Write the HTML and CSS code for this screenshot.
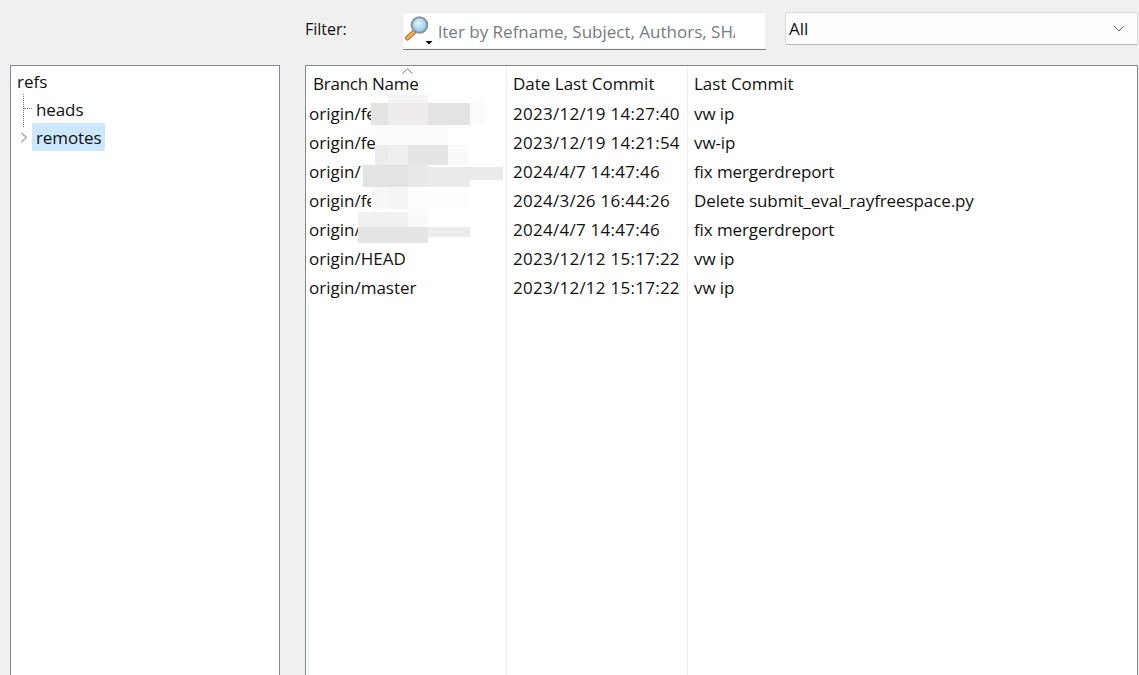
FILE: index.html
```html
<!DOCTYPE html>
<html lang="en">
<head>
<meta charset="utf-8">
<title>Branches</title>
<link rel="stylesheet" href="styles.css">
</head>
<body>
<div class="app">
  <header class="toolbar">
    <span class="filter-label">Filter:</span>
    <div class="search">
      <svg class="search-icon" width="30" height="32" viewBox="0 0 30 32">
        <defs>
          <radialGradient id="lens" cx="0.45" cy="0.4" r="0.6">
            <stop offset="0" stop-color="#e8f6fd"/>
            <stop offset="1" stop-color="#7fc0e6"/>
          </radialGradient>
        </defs>
        <path d="M10 17 L3.5 23" stroke="#b5722b" stroke-width="5" stroke-linecap="round"/>
        <path d="M10 17 L3.5 23" stroke="#f0b050" stroke-width="2.6" stroke-linecap="round"/>
        <circle cx="15.5" cy="10" r="7.8" fill="url(#lens)" stroke="#8a949c" stroke-width="2"/>
        <path d="M21.5 26 h7 l-3.5 3.5z" fill="#000"/>
      </svg>
      <span class="search-text">lter by Refname, Subject, Authors, SHA</span>
    </div>
    <div class="combo">
      <span>All</span>
      <svg class="combo-arrow" width="12" height="7" viewBox="0 0 12 7"><path d="M1 1 L6 6 L11 1" fill="none" stroke="#6a6a6a" stroke-width="1"/></svg>
    </div>
  </header>
  <main class="panes">
    <nav class="tree">
      <div class="tree-row tree-root">refs</div>
      <div class="tree-row tree-child">
        <span class="guide guide-v"></span>
        <span class="guide guide-h"></span>
        <span class="tree-label">heads</span>
      </div>
      <div class="tree-row tree-child">
        <svg class="expander" width="8" height="11" viewBox="0 0 8 11"><path d="M1.5 1 L6.5 5.5 L1.5 10" fill="none" stroke="#a6a6a6" stroke-width="1.3"/></svg>
        <span class="tree-label selected">remotes</span>
      </div>
    </nav>
    <section class="table">
      <div class="row head">
        <div class="col col-name">Branch Name
          <svg class="sort" width="11" height="6" viewBox="0 0 11 6"><path d="M0.5 5.5 L5.5 0.8 L10.5 5.5" fill="none" stroke="#7a7a7a" stroke-width="1"/></svg>
        </div>
        <div class="col col-date">Date Last Commit</div>
        <div class="col col-msg">Last Commit</div>
      </div>
      <div class="row"><div class="col col-name">origin/fe</div><div class="col col-date">2023/12/19 14:27:40</div><div class="col col-msg">vw ip</div></div>
      <div class="row"><div class="col col-name">origin/fe</div><div class="col col-date">2023/12/19 14:21:54</div><div class="col col-msg">vw-ip</div></div>
      <div class="row"><div class="col col-name">origin/</div><div class="col col-date">2024/4/7 14:47:46</div><div class="col col-msg">fix mergerdreport</div></div>
      <div class="row"><div class="col col-name">origin/fe</div><div class="col col-date">2024/3/26 16:44:26</div><div class="col col-msg">Delete submit_eval_rayfreespace.py</div></div>
      <div class="row"><div class="col col-name">origin/</div><div class="col col-date">2024/4/7 14:47:46</div><div class="col col-msg">fix mergerdreport</div></div>
      <div class="row"><div class="col col-name">origin/HEAD</div><div class="col col-date">2023/12/12 15:17:22</div><div class="col col-msg">vw ip</div></div>
      <div class="row"><div class="col col-name">origin/master</div><div class="col col-date">2023/12/12 15:17:22</div><div class="col col-msg">vw ip</div></div>
      <div class="filler">
        <div class="col col-name"></div><div class="col col-date"></div><div class="col col-msg"></div>
      </div>
      <svg class="redaction" width="200" height="160" viewBox="0 0 200 160" shape-rendering="crispEdges">
        <rect x="65" y="1" width="100" height="30" fill="#fff"/>
        <rect x="82" y="1" width="40" height="8" fill="#f4f4f4"/>
        <rect x="65" y="9" width="17" height="22" fill="#e4e4e4"/>
        <rect x="82" y="9" width="20" height="22" fill="#ededed"/>
        <rect x="102" y="9" width="20" height="22" fill="#eeedeb"/>
        <rect x="122" y="9" width="42" height="22" fill="#e2e3e3"/>
        <rect x="164" y="4" width="15" height="27" fill="#fbfbfb"/>
        <rect x="69" y="31" width="73" height="20" fill="#fbfbfb"/>
        <rect x="69" y="51" width="13" height="20" fill="#ececec"/>
        <rect x="82" y="51" width="20" height="20" fill="#efefef"/>
        <rect x="102" y="51" width="40" height="20" fill="#e3e4e4"/>
        <rect x="142" y="51" width="20" height="20" fill="#fafafa"/>
        <rect x="57" y="71" width="45" height="22" fill="#e3e3e3"/>
        <rect x="102" y="71" width="20" height="22" fill="#e9e9e9"/>
        <rect x="122" y="73" width="42" height="20" fill="#ebebeb"/>
        <rect x="164" y="73" width="33" height="13" fill="#ebebeb"/>
        <rect x="65" y="93" width="17" height="22" fill="#f7f7f7"/>
        <rect x="82" y="93" width="20" height="22" fill="#f5f5f5"/>
        <rect x="102" y="93" width="60" height="22" fill="#fdfdfd"/>
        <rect x="52" y="118" width="50" height="15" fill="#f1f1f1"/>
        <rect x="102" y="115" width="20" height="18" fill="#fafafa"/>
        <rect x="52" y="133" width="70" height="16" fill="#e4e4e4"/>
        <rect x="122" y="133" width="42" height="10" fill="#ececec"/>
      </svg>
    </section>
  </main>
</div>
</body>
</html>
```
FILE: styles.css
```css
* { box-sizing: border-box; }
html, body { margin: 0; height: 100%; overflow: hidden; }
body {
  background: #f0f0f0;
  color: #111;
  font-family: "Open Sans", "Noto Sans", "Liberation Sans", sans-serif;
  font-size: 17px;
}
.app { display: flex; flex-direction: column; height: 675px; }

.toolbar {
  display: flex;
  align-items: flex-start;
  height: 65px;
  padding: 12px 1px 0 305px;
}
.filter-label { width: 98px; line-height: 34px; font-size: 16px; }
.search {
  display: flex;
  align-items: center;
  width: 363px;
  height: 37px;
  margin-top: 1px;
  background: #fff;
  border-bottom: 1px solid #808080;
  box-shadow: inset 0 0 0 1px #f6f6f6;
  overflow: hidden;
}
.search-icon { flex: none; margin-left: 1px; margin-right: 4px; }
.search-text {
  width: 297px;
  height: 36px;
  overflow: hidden;
  white-space: nowrap;
  color: #747c84;
  line-height: 38px;
}
.combo {
  display: flex;
  align-items: center;
  justify-content: space-between;
  width: 353px;
  height: 33px;
  margin-left: 19px;
  padding: 0 12px 0 3px;
  background: #fdfdfd;
  border: 1px solid #d9d9d9;
  border-bottom-color: #b8b8b8;
  border-radius: 2px;
}

.panes {
  flex: 1;
  display: flex;
  gap: 25px;
  padding: 0 1px 0 10px;
  min-height: 0;
}
.tree {
  width: 270px;
  padding: 2px 0 0 6px;
  background: #fff;
  border: 1px solid #828790;
  border-bottom: 0;
}
.tree-row { position: relative; display: flex; align-items: center; height: 28px; }
.tree-root { height: 27px; }
.tree-child { padding-left: 15px; letter-spacing: -0.1px; }
.tree-label { height: 28px; padding: 0 4px; line-height: 30px; border-radius: 2px; }
.selected { background: #cce8ff; width: 73px; }
.guide { position: absolute; }
.guide-v { left: 6px; top: -1px; height: 33px; border-left: 1px dotted #808080; }
.guide-h { left: 7px; top: 13px; width: 8px; border-top: 1px dotted #808080; }
.expander { position: absolute; left: 3px; top: 9px; }

.table {
  position: relative;
  flex: 1;
  display: flex;
  flex-direction: column;
  background: #fff;
  border: 1px solid #828790;
  border-bottom: 0;
}
.row { display: flex; height: 29px; line-height: 29px; flex: none; white-space: nowrap; }
.head { height: 33px; line-height: 35px; }
.col { flex: none; border-right: 1px solid #eef1f6; padding-left: 3px; }
.col-name { position: relative; width: 201px; }
.col-date { width: 181px; padding-left: 6px; letter-spacing: 0.26px; }
.col-msg { flex: 1; border-right: 0; padding-left: 6px; letter-spacing: -0.1px; }
.head .col-name { padding-left: 7px; letter-spacing: -0.25px; }
.head .col-date { letter-spacing: 0; }
.head .col-msg { letter-spacing: 0; }
.filler { flex: 1; display: flex; padding-left: 2px; }
.filler .col-name { width: 199px; border-left: 1px solid #e3eef8; }
.sort { position: absolute; left: 96px; top: 2px; }
.redaction { position: absolute; left: 0; top: 28px; }
```
